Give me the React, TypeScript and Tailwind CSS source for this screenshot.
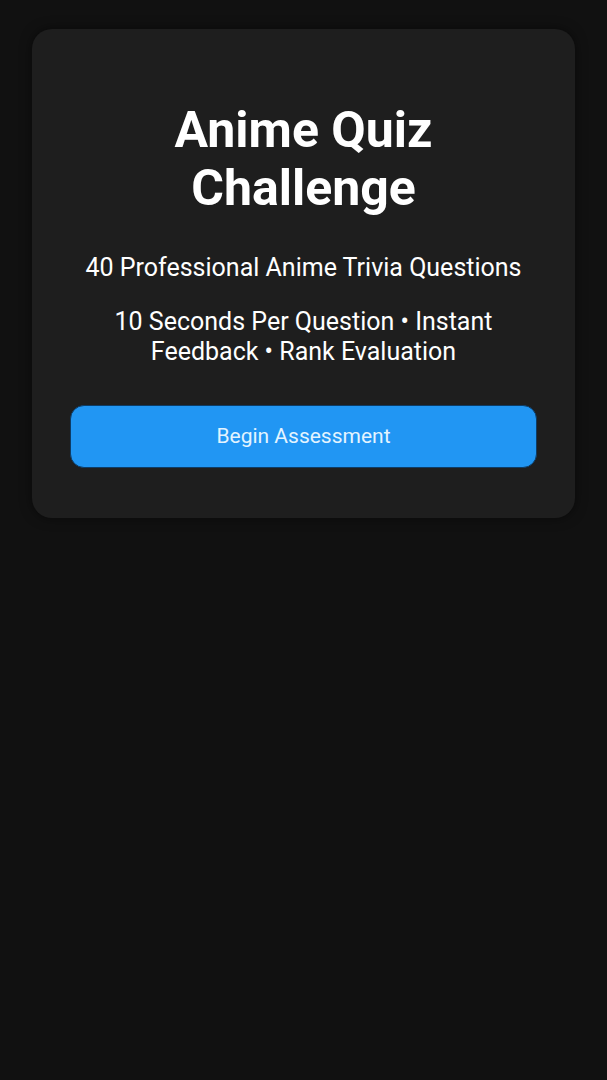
import React from "react";

function App() {
  return (
    <div
      className="min-h-[1080px] bg-[#111111] px-8 pt-[29px]"
      style={{ fontFamily: "Roboto, 'Liberation Sans', sans-serif" }}
    >
      <div className="flex flex-col items-center rounded-[20px] bg-[#1e1e1e] px-[38px] pt-[72px] pb-[50px] text-center shadow-[0_0_12px_rgba(0,0,0,0.5)]">
        <h1 className="text-[50px] font-bold leading-[58px] text-white">
          Anime Quiz
          <br />
          Challenge
        </h1>
        <p className="mt-[36px] text-[25px] leading-[30px] text-white">
          40 Professional Anime Trivia Questions
        </p>
        <p className="mt-[24px] px-8 text-[25px] leading-[30px] text-white">
          10 Seconds Per Question • Instant Feedback • Rank Evaluation
        </p>
        <button className="mt-[38px] h-[63px] w-full rounded-[14px] border border-[#0d3c66] bg-[#2196f3] text-[21px] text-[#e3f4ff]">
          Begin Assessment
        </button>
      </div>
    </div>
  );
}

export default App;
